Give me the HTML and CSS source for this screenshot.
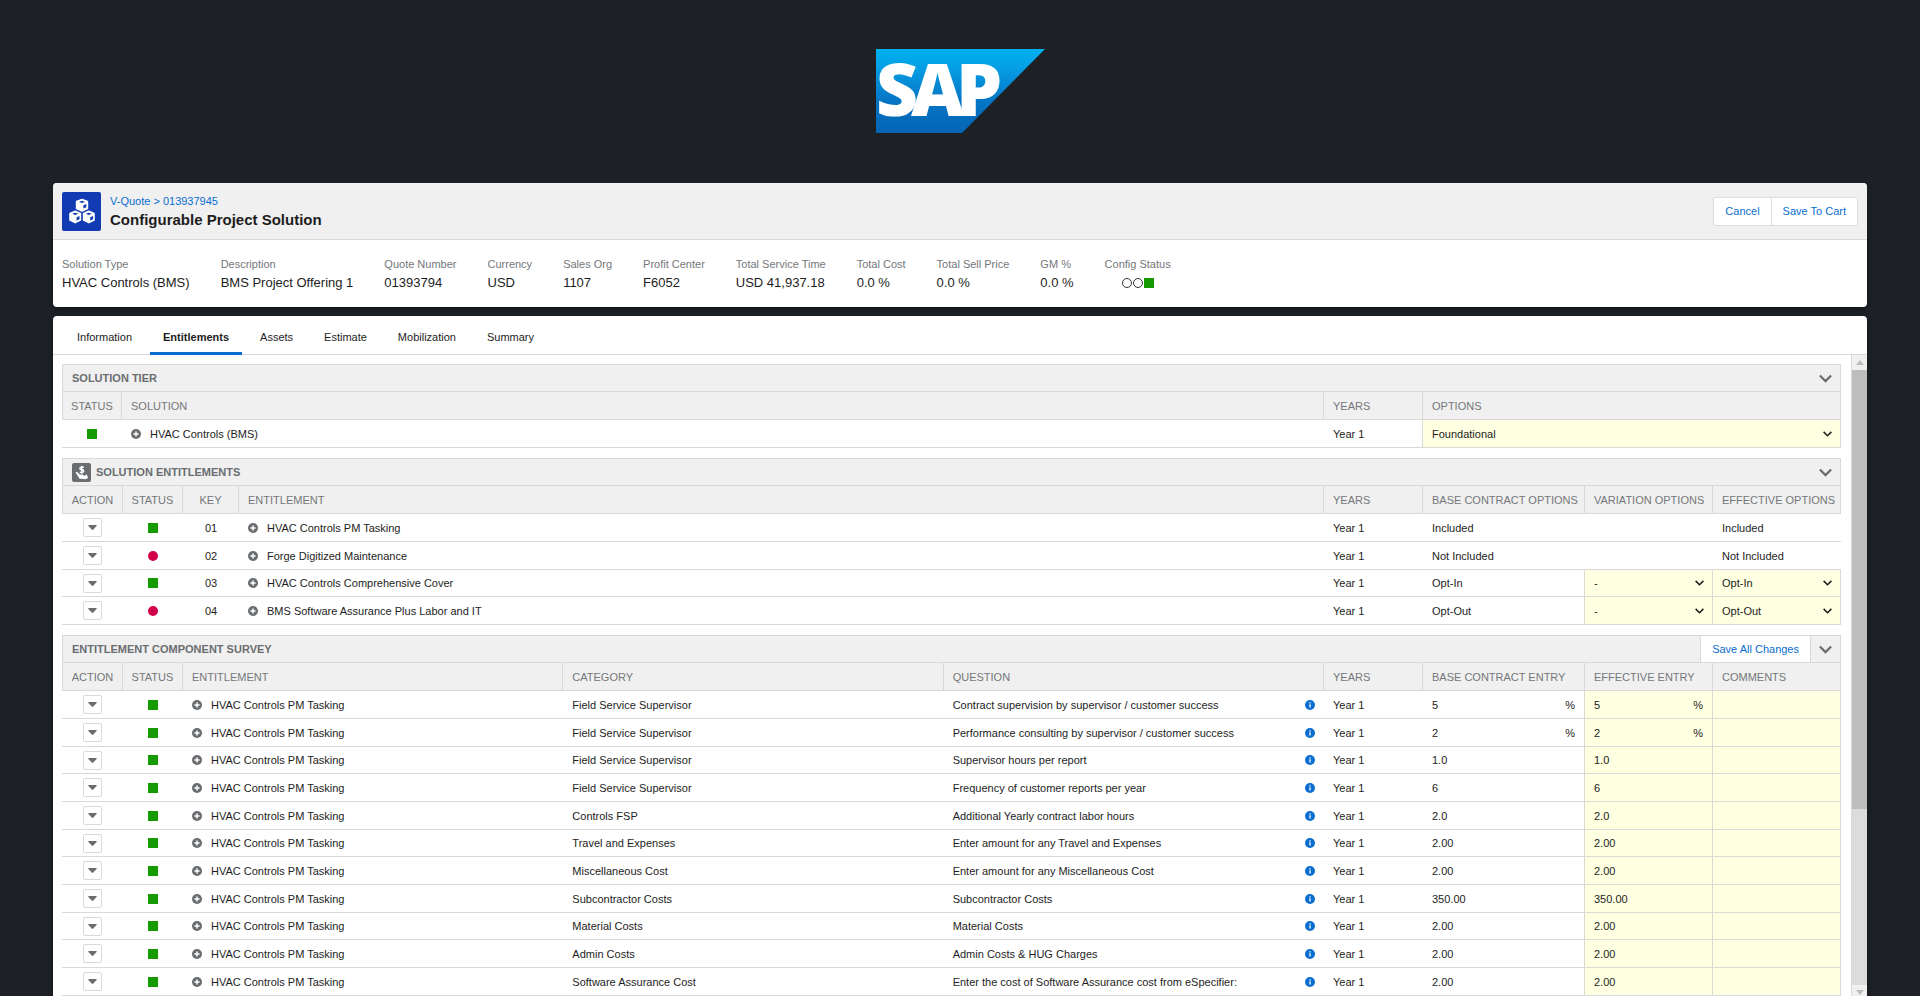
FILE: index.html
```html
<!DOCTYPE html>
<html lang="en">
<head>
<meta charset="utf-8">
<title>Configurable Project Solution</title>
<link rel="stylesheet" href="styles.css">
</head>
<body>
<svg class="sprite" aria-hidden="true">
  <symbol id="plus" viewBox="0 0 10 10"><circle cx="5" cy="5" r="5" fill="#6a6d70"/><path d="M5 2.4v5.2M2.4 5h5.2" stroke="#fff" stroke-width="1.5"/></symbol>
  <symbol id="info" viewBox="0 0 10 10"><circle cx="5" cy="5" r="5" fill="#0a6ed1"/><path d="M5 4.2v3.4M5 2.3v1.2" stroke="#fff" stroke-width="1.3"/></symbol>
  <symbol id="caret" viewBox="0 0 9 5"><path d="M0.8 0h7.4q.9.2.4 1L5.3 4.6q-.8.7-1.6 0L.4 1Q-.1.2.8 0z" fill="#6a6d70"/></symbol>
  <symbol id="chevron" viewBox="0 0 12 8"><path d="M.8 1.2 6 6.4l5.200-5.200" fill="none" stroke="currentColor" stroke-width="2"/></symbol>
</svg>

<div class="brand">
  <svg width="169" height="84" viewBox="0 0 169 84" role="img" aria-label="SAP">
    <defs><linearGradient id="sky" x1="0" y1="0" x2="0" y2="1"><stop offset="0" stop-color="#00b1f1"/><stop offset=".25" stop-color="#069ce2"/><stop offset=".6" stop-color="#0576c6"/><stop offset="1" stop-color="#0464b4"/></linearGradient></defs>
    <path d="M0 0h169L86 84H0z" fill="url(#sky)"/>
    <text class="brand-text" y="67" x="0 35 80">SAP</text>
  </svg>
</div>

<header class="card summary">
  <div class="summary-head">
    <span class="app-icon">
      <svg width="28" height="28" viewBox="0 0 28 28" aria-hidden="true">
        <g fill="#fff" stroke="#fff" stroke-width="1.600" stroke-linejoin="round">
          <path d="M14 2.500 19.400 4.500v7L14 14 8.600 11.500v-7z"/>
          <path d="M7.200 14.200l5.200 2.200v6.600l-5.200 2.600L2 23v-6.600z"/>
          <path d="M20.800 14.200l5.200 2.200v6.600l-5.200 2.600-5.200-2.600v-6.600z"/>
        </g>
        <g fill="#123ab3">
          <path d="M14 3.800l3 1.100-3 1.100-3-1.100zM15.400 8.300l2.900-1.200v3.200l-2.900 1.300z"/>
          <path d="M7.200 15.700l3 1.100-3 1.200-3-1.200zM8.600 20.200l2.900-1.200v3.200l-2.900 1.400z"/>
          <path d="M20.800 15.700l3 1.100-3 1.200-3-1.200zM22.200 20.200l2.900-1.200v3.200l-2.900 1.400z"/>
        </g>
      </svg>
    </span>
    <div class="titles">
      <a class="crumb" href="#">V-Quote &gt; 013937945</a>
      <h1>Configurable Project Solution</h1>
    </div>
    <div class="btn-group">
      <button type="button">Cancel</button>
      <button type="button">Save To Cart</button>
    </div>
  </div>
  <dl class="facts">
    <div><dt>Solution Type</dt><dd>HVAC Controls (BMS)</dd></div>
    <div><dt>Description</dt><dd>BMS Project Offering 1</dd></div>
    <div><dt>Quote Number</dt><dd>01393794</dd></div>
    <div><dt>Currency</dt><dd>USD</dd></div>
    <div><dt>Sales Org</dt><dd>1107</dd></div>
    <div><dt>Profit Center</dt><dd>F6052</dd></div>
    <div><dt>Total Service Time</dt><dd>USD 41,937.18</dd></div>
    <div><dt>Total Cost</dt><dd>0.0 %</dd></div>
    <div><dt>Total Sell Price</dt><dd>0.0 %</dd></div>
    <div><dt>GM %</dt><dd>0.0 %</dd></div>
    <div><dt>Config Status</dt><dd class="lights"><i class="ring"></i><i class="ring"></i><i class="ok"></i></dd></div>
  </dl>
</header>

<main class="card work">
  <nav class="tabs">
    <a href="#">Information</a>
    <a href="#" class="active" aria-current="page">Entitlements</a>
    <a href="#">Assets</a>
    <a href="#">Estimate</a>
    <a href="#">Mobilization</a>
    <a href="#">Summary</a>
  </nav>
  <div class="body">
    <div class="panels">

      <section>
        <div class="bar"><h2>Solution Tier</h2><button type="button" class="fold" aria-label="Collapse solution tier"><svg width="13" height="9"><use href="#chevron"/></svg></button></div>
        <table>
          <colgroup><col class="w-status"><col><col class="w-years"><col class="w-options"></colgroup>
          <thead><tr><th class="mid">Status</th><th>Solution</th><th>Years</th><th>Options</th></tr></thead>
          <tbody>
            <tr><td class="mid"><i class="ok"></i></td><td><span class="item"><svg width="10" height="10"><use href="#plus"/></svg>HVAC Controls (BMS)</span></td><td>Year 1</td><td class="edit"><span class="pick"><select aria-label="Tier option"><option>Foundational</option></select><svg width="9" height="6"><use href="#chevron"/></svg></span></td></tr>
          </tbody>
        </table>
      </section>

      <section>
        <div class="bar">
          <svg class="bar-icon" width="19" height="19" viewBox="0 0 19 19" aria-hidden="true"><rect width="19" height="19" rx="2" fill="#6a6d70"/><path d="M11.800 4.200H9.200q-1.300 0-1.300 1.300T9.200 6.800h1.200q1.300 0 1.300 1.300t-1.300 1.300H7.700M9.800 2.800v8" fill="none" stroke="#fff" stroke-width="1.400"/><path d="M3.500 9.200l1.300-.4 3 2.700h3l.7 1h1.600l1.800-1 1.100 3.600-2.500 1.200-6-.6z" fill="#fff"/></svg>
          <h2>Solution Entitlements</h2><button type="button" class="fold" aria-label="Collapse solution entitlements"><svg width="13" height="9"><use href="#chevron"/></svg></button>
        </div>
        <table>
          <colgroup><col class="w-action"><col class="w-status"><col class="w-key"><col><col class="w-years"><col class="w-base"><col class="w-entry"><col class="w-entry"></colgroup>
          <thead><tr><th class="mid">Action</th><th class="mid">Status</th><th class="mid">Key</th><th>Entitlement</th><th>Years</th><th>Base Contract Options</th><th>Variation Options</th><th>Effective Options</th></tr></thead>
          <tbody>
            <tr><td class="mid"><button type="button" class="menu" aria-label="Actions"><svg width="9" height="5"><use href="#caret"/></svg></button></td><td class="mid"><i class="ok"></i></td><td class="mid">01</td><td><span class="item"><svg width="10" height="10"><use href="#plus"/></svg>HVAC Controls PM Tasking</span></td><td>Year 1</td><td>Included</td><td></td><td>Included</td></tr>
            <tr><td class="mid"><button type="button" class="menu" aria-label="Actions"><svg width="9" height="5"><use href="#caret"/></svg></button></td><td class="mid"><i class="off"></i></td><td class="mid">02</td><td><span class="item"><svg width="10" height="10"><use href="#plus"/></svg>Forge Digitized Maintenance</span></td><td>Year 1</td><td>Not Included</td><td></td><td>Not Included</td></tr>
            <tr><td class="mid"><button type="button" class="menu" aria-label="Actions"><svg width="9" height="5"><use href="#caret"/></svg></button></td><td class="mid"><i class="ok"></i></td><td class="mid">03</td><td><span class="item"><svg width="10" height="10"><use href="#plus"/></svg>HVAC Controls Comprehensive Cover</span></td><td>Year 1</td><td>Opt-In</td><td class="edit"><span class="pick"><select aria-label="Variation option"><option>-</option></select><svg width="9" height="6"><use href="#chevron"/></svg></span></td><td class="edit"><span class="pick"><select aria-label="Effective option"><option>Opt-In</option></select><svg width="9" height="6"><use href="#chevron"/></svg></span></td></tr>
            <tr><td class="mid"><button type="button" class="menu" aria-label="Actions"><svg width="9" height="5"><use href="#caret"/></svg></button></td><td class="mid"><i class="off"></i></td><td class="mid">04</td><td><span class="item"><svg width="10" height="10"><use href="#plus"/></svg>BMS Software Assurance Plus Labor and IT</span></td><td>Year 1</td><td>Opt-Out</td><td class="edit"><span class="pick"><select aria-label="Variation option"><option>-</option></select><svg width="9" height="6"><use href="#chevron"/></svg></span></td><td class="edit"><span class="pick"><select aria-label="Effective option"><option>Opt-Out</option></select><svg width="9" height="6"><use href="#chevron"/></svg></span></td></tr>
          </tbody>
        </table>
      </section>

      <section>
        <div class="bar"><h2>Entitlement Component Survey</h2><button type="button" class="save">Save All Changes</button><button type="button" class="fold" aria-label="Collapse survey"><svg width="13" height="9"><use href="#chevron"/></svg></button></div>
        <table>
          <colgroup><col class="w-action"><col class="w-status"><col><col><col><col class="w-years"><col class="w-base"><col class="w-entry"><col class="w-entry"></colgroup>
          <thead><tr><th class="mid">Action</th><th class="mid">Status</th><th>Entitlement</th><th>Category</th><th>Question</th><th>Years</th><th>Base Contract Entry</th><th>Effective Entry</th><th>Comments</th></tr></thead>
          <tbody id="survey"></tbody>
        </table>
      </section>

    </div>
    <div class="scroll" aria-hidden="true">
      <span class="scroll-end"><svg width="8" height="5" viewBox="0 0 8 5"><path d="M4 0l4 5H0z" fill="#bdbdbd"/></svg></span>
      <span class="thumb"></span>
      <span class="track"></span>
      <span class="scroll-end"><svg width="8" height="5" viewBox="0 0 8 5"><path d="M0 0h8L4 5z" fill="#bdbdbd"/></svg></span>
    </div>
  </div>
</main>
<script src="survey.js"></script>
</body>
</html>
```
FILE: survey.js
```js
const questions = [
  ["Field Service Supervisor", "Contract supervision by supervisor / customer success", "5", "%"],
  ["Field Service Supervisor", "Performance consulting by supervisor / customer success", "2", "%"],
  ["Field Service Supervisor", "Supervisor hours per report", "1.0", ""],
  ["Field Service Supervisor", "Frequency of customer reports per year", "6", ""],
  ["Controls FSP", "Additional Yearly contract labor hours", "2.0", ""],
  ["Travel and Expenses", "Enter amount for any Travel and Expenses", "2.00", ""],
  ["Miscellaneous Cost", "Enter amount for any Miscellaneous Cost", "2.00", ""],
  ["Subcontractor Costs", "Subcontractor Costs", "350.00", ""],
  ["Material Costs", "Material Costs", "2.00", ""],
  ["Admin Costs", "Admin Costs &amp; HUG Charges", "2.00", ""],
  ["Software Assurance Cost", "Enter the cost of Software Assurance cost from eSpecifier:", "2.00", ""]
];

document.getElementById("survey").innerHTML = questions.map(([category, question, value, unit]) => `
  <tr>
    <td class="mid"><button type="button" class="menu" aria-label="Actions"><svg width="9" height="5"><use href="#caret"/></svg></button></td>
    <td class="mid"><i class="ok"></i></td>
    <td><span class="item"><svg width="10" height="10"><use href="#plus"/></svg>HVAC Controls PM Tasking</span></td>
    <td>${category}</td>
    <td><span class="split">${question}<svg width="10" height="10"><use href="#info"/></svg></span></td>
    <td>Year 1</td>
    <td><span class="split">${value}<span>${unit}</span></span></td>
    <td class="edit"><span class="field"><input type="text" value="${value}" aria-label="Effective entry"><span>${unit}</span></span></td>
    <td class="edit"><span class="field"><input type="text" aria-label="Comments"></span></td>
  </tr>`).join("");
```
FILE: styles.css
```css
* { box-sizing: border-box; }

body {
  margin: 0;
  height: 100vh;
  overflow: hidden;
  display: flex;
  flex-direction: column;
  padding: 0 53px;
  background: #1d2126;
  color: #32363a;
  font: 11px/16px "Liberation Sans", Arial, sans-serif;
}

button, input, select { font: inherit; color: inherit; margin: 0; }
svg { display: block; flex: none; }
a { text-decoration: none; color: inherit; }
.sprite { position: absolute; width: 0; height: 0; }

.brand { display: flex; justify-content: center; padding: 49px 0 50px; }
.brand svg { overflow: visible; }
.brand-text { font: 800 73px "Open Sans", sans-serif; fill: #fff; }

.card { background: #fff; border-radius: 4px; box-shadow: 0 2px 4px #11151a; }

.summary { margin-bottom: 9px; flex: none; overflow: hidden; }
.summary-head {
  display: flex;
  align-items: center;
  gap: 9px;
  height: 57px;
  padding: 0 9px;
  background: #f0f0f0;
  border-bottom: 1px solid #d9d9d9;
}
.app-icon {
  display: grid;
  place-items: center;
  width: 39px;
  height: 39px;
  border-radius: 2px;
  background: #123ab3;
}
.titles { flex: 1; padding-top: 2px; }
.crumb { display: block; color: #0a6ed1; }
h1 { margin: 0; font-size: 15px; line-height: 22px; font-weight: 700; color: #1d1d1d; }

.btn-group { display: flex; border: 1px solid #ddd; border-radius: 2px; background: #fff; }
.btn-group button { height: 27px; padding: 0 11px; border: 0; background: none; color: #0a6ed1; }
.btn-group button + button { border-left: 1px solid #ddd; }

.facts { display: flex; gap: 31px; margin: 0; padding: 15px 9px 14px; }
.facts dt { line-height: 18px; color: #74777a; }
.facts dd { margin: 0; font-size: 13px; line-height: 20px; color: #1d1d1d; }
.facts .lights { display: flex; align-items: center; justify-content: center; gap: 1px; height: 20px; }
.ring { width: 10px; height: 10px; border: 1px solid #32363a; border-radius: 50%; }

.ok, .off { display: block; width: 10px; height: 10px; background: #159b00; }
.off { border-radius: 50%; background: #d2004b; }
td .ok, td .off { margin: 0 auto; }

.work { flex: 1; min-height: 0; display: flex; flex-direction: column; border-radius: 4px 4px 0 0; }
.tabs { display: flex; flex: none; gap: 5px; height: 39px; padding: 0 11px; border-bottom: 1px solid #d9d9d9; }
.tabs a { height: 39px; padding: 0 13px; line-height: 43px; color: #1d1d1d; border-bottom: 3px solid transparent; }
.tabs .active { font-weight: 700; border-color: #0a6ed1; }

.body { flex: 1; min-height: 0; display: flex; }
.panels { flex: 1; min-width: 0; display: flex; flex-direction: column; gap: 10px; padding: 9px 10px 0 9px; overflow: hidden; }
.panels section { flex: none; }

.bar {
  display: flex;
  align-items: center;
  height: 28px;
  padding-left: 9px;
  border: 1px solid #d9d9d9;
  background: #f0f0f0;
}
.bar h2 { flex: 1; margin: 0; font-size: 11px; font-weight: 700; text-transform: uppercase; color: #6a6d70; }
.bar-icon { margin-right: 5px; }
.fold { display: grid; place-items: center; width: 29px; height: 26px; padding: 0; border: 0; background: none; color: #6a6d70; }
.save { height: 26px; padding: 0 11px; border: solid #d9d9d9; border-width: 0 1px; background: #fff; color: #0a6ed1; }

table { width: 100%; table-layout: fixed; border-collapse: separate; border-spacing: 0; }
.w-action { width: 61px; }
.w-status { width: 60px; }
.w-key { width: 56px; }
.w-years { width: 99px; }
.w-base { width: 162px; }
.w-entry { width: 128px; }
.w-options { width: 418px; }

th, td { padding: 0 9px; text-align: left; white-space: nowrap; border-bottom: 1px solid #d9d9d9; }
th {
  height: 28px;
  font-weight: 400;
  text-transform: uppercase;
  color: #74777a;
  background: #f0f0f0;
  border-right: 1px solid #d9d9d9;
}
th:first-child { border-left: 1px solid #d9d9d9; }
td { height: 28px; color: #1d1d1d; }
tbody tr:nth-child(3n) td { height: 27px; }
th.mid, td.mid { padding: 0; text-align: center; }

td.edit { padding: 0; background: #ffffe1; border-right: 1px solid #d9d9d9; }
td:has(+ .edit) { border-right: 1px solid #d9d9d9; }

.menu { display: grid; place-items: center; width: 19px; height: 19px; margin: 0 auto; padding: 0; border: 1px solid #d9d9d9; border-radius: 2px; background: #fff; }
.item { display: flex; align-items: center; gap: 9px; }
.split { display: flex; align-items: center; justify-content: space-between; }

.pick { display: grid; align-items: center; }
.pick > * { grid-area: 1 / 1; }
.pick select { width: 100%; height: 26px; padding: 0 9px; border: 0; background: none; appearance: none; }
.pick svg { justify-self: end; margin-right: 8px; pointer-events: none; }

.field { display: flex; align-items: center; padding: 0 9px; }
.field input { flex: 1; min-width: 0; height: 26px; padding: 0; border: 0; background: none; }

.scroll { flex: none; display: flex; flex-direction: column; width: 16px; border-left: 1px solid #d9d9d9; }
.scroll-end { display: grid; place-items: center; height: 15px; background: #f0f0f0; }
.scroll-end:last-child { height: 11px; padding-top: 4px; }
.thumb { flex: 5; background: #bdbdbd; }
.track { flex: 2; background: #dcdcdc; }
```
